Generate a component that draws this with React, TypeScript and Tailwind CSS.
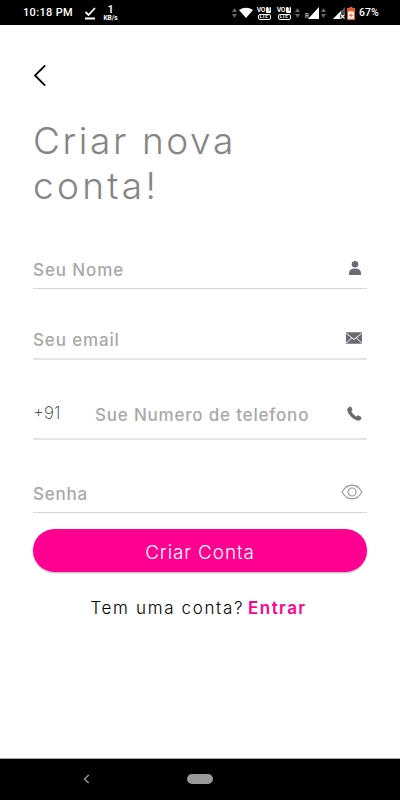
import type { ReactNode } from "react";

function UpDown() {
  return (
    <svg width="5" height="10" viewBox="0 0 5 10" fill="#666">
      <path d="M2.5 0 5 4H0zM2.5 10 0 6h5z" />
    </svg>
  );
}

function VoLte() {
  return (
    <div className="flex h-[13px] w-[14px] flex-col items-center justify-between text-white">
      <div className="flex h-[6px] items-center text-[6px] leading-none font-bold tracking-[-0.2px]">
        VO
        <span className="ml-px flex h-[6px] w-[5px] items-center justify-center rounded-[1px] bg-white text-[5px] text-black">1</span>
      </div>
      <div className="flex h-[6px] w-[13px] items-center justify-center rounded-[2px] border border-white text-[5px] leading-none font-bold">LTE</div>
    </div>
  );
}

function StatusBar() {
  return (
    <header className="flex h-[25px] items-center bg-black pt-[1px] text-white">
      <span className="ml-[23px] w-[61px] pt-px text-[11px] font-medium tracking-[0.35px] whitespace-nowrap font-[Roboto]">10:18 PM</span>
      <svg width="12" height="14" viewBox="0 0 12 14" fill="none" stroke="white" strokeWidth="1.8">
        <path d="M1.5 6 4.5 9 11 2M1 12.5h10" />
      </svg>
      <div className="ml-[7px] flex w-[15px] flex-col items-center gap-px font-bold font-[Roboto]">
        <span className="h-[9px] text-[10px] leading-[9px]">1</span>
        <span className="h-[7px] text-[6.5px] leading-[7px]">KB/s</span>
      </div>
      <div className="ml-[114px] flex items-center">
        <UpDown />
        <svg className="ml-[2px]" width="14" height="12" viewBox="0 0 14 12" fill="white">
          <path d="M0 3Q7-1.5 14 3L7 11z" />
        </svg>
        <div className="ml-[4px]"><VoLte /></div>
        <div className="ml-[6px]"><VoLte /></div>
        <div className="ml-[4px]"><UpDown /></div>
        <span className="ml-[5px] mt-[6px] w-[3px] text-[6px] leading-none">R</span>
        <svg width="11" height="12" viewBox="0 0 12 12" preserveAspectRatio="none" fill="white"><path d="M12 0v12H0z" /></svg>
        <div className="ml-[2px]"><UpDown /></div>
        <svg className="ml-[7px]" width="12" height="12" viewBox="0 0 12 12">
          <path d="M12 0v12H0z" fill="#555" />
          <path d="M8 4v8H0z" fill="white" />
          <path d="m7.5 7.5 4 4m0-4-4 4" stroke="black" strokeWidth="2.6" />
          <path d="m7.5 7.5 4 4m0-4-4 4" stroke="white" strokeWidth="1.1" />
        </svg>
        <svg className="ml-[2px]" width="8" height="13" viewBox="0 0 8 13">
          <path d="M2.5 0h3v1H8v12H0V1h2.5z" fill="#e65b2b" />
          <path d="M1.2 4.5h5.6v7.3H1.2z" fill="white" />
          <path d="M4 6.2v4M2 8.2h4" stroke="#e65b2b" strokeWidth="1" />
        </svg>
        <span className="ml-[4px] text-[10.5px] font-medium font-[Roboto]">67%</span>
      </div>
    </header>
  );
}

function Field({ className, label, icon }: { className: string; label: ReactNode; icon: ReactNode }) {
  return (
    <div className={"flex items-center justify-between " + className}>
      <div className="flex items-center pt-[2px] text-[17px] leading-5 font-medium text-[#a9a9a7]">{label}</div>
      {icon}
    </div>
  );
}

export default function App() {
  return (
    <div className="flex h-[800px] w-[400px] flex-col bg-white font-[Inter,sans-serif]">
      <StatusBar />
      <main className="flex flex-1 flex-col px-[33px] pt-[39px]">
        <svg width="14" height="23" viewBox="0 0 14 23" fill="none" stroke="black" strokeWidth="1.8">
          <path d="M12.2 1.3 2 11.5l10.2 10.2" />
        </svg>
        <h1 className="mt-[31px] text-[37px] leading-[45px] font-light tracking-[2.6px] text-[#858585]">
          <span className="block whitespace-nowrap">Criar nova</span>
          <span className="block whitespace-nowrap tracking-[3.3px]">conta!</span>
        </h1>
        <Field
          className="mt-[41px] h-[40px] border-b border-[#d3d3d3]"
          label={<span className="tracking-[0.9px]">Seu Nome</span>}
          icon={
            <svg className="mr-[6px] mb-[2px]" width="12" height="14" viewBox="0 0 12 14" fill="#686b70">
              <circle cx="6" cy="3.3" r="3.3" />
              <path d="M0 14v-1.5q0-5 6-5t6 5V14z" />
            </svg>
          }
        />
        <Field
          className="mt-[30px] h-[41px] border-b-2 border-[#e5e5e5]"
          label={<span className="tracking-[0.85px]">Seu email</span>}
          icon={
            <svg className="mr-[5px] mb-[1px]" width="16" height="12" viewBox="0 0 16 12">
              <rect y=".3" width="16" height="11.4" rx="1" fill="#686b70" />
              <path d="m.5 1.5 7.5 6 7.5-6M.5 11l5-5m5 0 5 5" fill="none" stroke="white" />
            </svg>
          }
        />
        <Field
          className="mt-[29px] h-[51px] border-b-2 border-[#e5e5e5]"
          label={
            <>
              <span className="mb-[4px] w-[62px] text-[17px] font-extralight text-[#333]">+91</span>
              <span className="tracking-[0.8px] whitespace-nowrap">Sue Numero de telefono</span>
            </>
          }
          icon={
            <svg className="mr-[5px] mb-px" width="15" height="15" viewBox="0 0 15 15" fill="#686b70">
              <path d="M1.1 1.8 3.2.4q.6-.3.9.3l1.3 2.8q.2.6-.3 1l-.9.8q1.8 3.6 5.3 5.4l.9-1.1q.4-.5 1-.2l2.8 1.5q.6.3.3.9l-1.1 2.1q-.4.7-1.3.7-4.1-.1-8.2-4.2Q-.1 6.3.4 3q.1-.8.7-1.2z" />
            </svg>
          }
        />
        <Field
          className="mt-[33px] h-[40px] border-b border-[#d3d3d3]"
          label={<span className="tracking-[0.75px]">Senha</span>}
          icon={
            <svg className="mr-[4px] mb-[2px]" width="22" height="16" viewBox="0 0 22 16" fill="none" stroke="#999" strokeWidth="1.2">
              <path d="M1 8Q5 1.2 11 1.2T21 8Q17 14.8 11 14.8T1 8Z" />
              <circle cx="11" cy="8" r="4" />
            </svg>
          }
        />
        <button className="mt-[16px] h-[43px] w-full shrink-0 rounded-[22px] bg-[#ff0090] pt-[5px] text-[19px] font-light tracking-[0.85px] text-white shadow-[0_1px_2px_rgba(0,0,0,0.3)]">
          Criar Conta
        </button>
        <p className="mt-[26px] flex justify-center pr-[3px] text-[17px] leading-5 font-light tracking-[1.65px] whitespace-nowrap text-black">
          Tem uma conta?
          <a className="ml-[4px] font-semibold tracking-[1.45px] text-[#ff0090]">Entrar</a>
        </p>
      </main>
      <nav className="flex h-[42px] items-center border-t border-[#aaa] bg-black pb-px">
        <svg className="ml-[83px]" width="7" height="10" viewBox="0 0 7 10" fill="none" stroke="#999" strokeWidth="1.4">
          <path d="M5.7 1 1.5 5l4.2 4" />
        </svg>
        <div className="ml-[97px] h-[10px] w-[26px] rounded-full bg-[#999]" />
      </nav>
    </div>
  );
}
